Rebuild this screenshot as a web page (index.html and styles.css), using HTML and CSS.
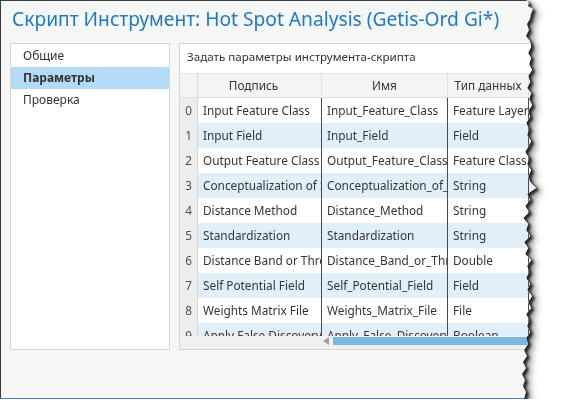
FILE: index.html
```
<!DOCTYPE html>
<html>

<head>
    <title>Скрипт Инструмент</title>
    <link rel="stylesheet" href="styles.css">
</head>

<body>
    <div class="frame">
        <div class="window">
            <h1 class="title">Скрипт Инструмент: Hot Spot Analysis (Getis-Ord Gi*)</h1>
            <div class="content">
                <ul class="nav">
                    <li>Общие</li>
                    <li class="active">Параметры</li>
                    <li>Проверка</li>
                </ul>
                <div class="panel">
                    <div class="panel-head">Задать параметры инструмента-скрипта</div>
                    <div class="grid">
                        <div class="row head">
                            <div class="num"></div>
                            <div class="cell caption">Подпись</div>
                            <div class="cell">Имя</div>
                            <div class="cell">Тип данных</div>
                            <div class="cell"></div>
                        </div>
                        <div class="row">
                            <div class="num">0</div>
                            <div class="cell">Input Feature Class</div>
                            <div class="cell">Input_Feature_Class</div>
                            <div class="cell">Feature Layer</div>
                            <div class="cell"></div>
                        </div>
                        <div class="row alt">
                            <div class="num">1</div>
                            <div class="cell">Input Field</div>
                            <div class="cell">Input_Field</div>
                            <div class="cell">Field</div>
                            <div class="cell"></div>
                        </div>
                        <div class="row">
                            <div class="num">2</div>
                            <div class="cell">Output Feature Class</div>
                            <div class="cell">Output_Feature_Class</div>
                            <div class="cell">Feature Class</div>
                            <div class="cell"></div>
                        </div>
                        <div class="row alt">
                            <div class="num">3</div>
                            <div class="cell">Conceptualization of Spatial Relationships</div>
                            <div class="cell">Conceptualization_of_Spatial_Relationships</div>
                            <div class="cell">String</div>
                            <div class="cell"></div>
                        </div>
                        <div class="row">
                            <div class="num">4</div>
                            <div class="cell">Distance Method</div>
                            <div class="cell">Distance_Method</div>
                            <div class="cell">String</div>
                            <div class="cell"></div>
                        </div>
                        <div class="row alt">
                            <div class="num">5</div>
                            <div class="cell">Standardization</div>
                            <div class="cell">Standardization</div>
                            <div class="cell">String</div>
                            <div class="cell"></div>
                        </div>
                        <div class="row">
                            <div class="num">6</div>
                            <div class="cell">Distance Band or Threshold Distance</div>
                            <div class="cell">Distance_Band_or_Threshold_Distance</div>
                            <div class="cell">Double</div>
                            <div class="cell"></div>
                        </div>
                        <div class="row alt">
                            <div class="num">7</div>
                            <div class="cell">Self Potential Field</div>
                            <div class="cell">Self_Potential_Field</div>
                            <div class="cell">Field</div>
                            <div class="cell"></div>
                        </div>
                        <div class="row">
                            <div class="num">8</div>
                            <div class="cell">Weights Matrix File</div>
                            <div class="cell">Weights_Matrix_File</div>
                            <div class="cell">File</div>
                            <div class="cell"></div>
                        </div>
                        <div class="row alt">
                            <div class="num">9</div>
                            <div class="cell">Apply False Discovery Rate (FDR) Correction</div>
                            <div class="cell">Apply_False_Discovery_Rate__FDR__Correction</div>
                            <div class="cell">Boolean</div>
                            <div class="cell"></div>
                        </div>
                    </div>
                    <div class="hscroll">
                        <div class="arrow"></div>
                        <div class="thumb"></div>
                    </div>
                </div>
            </div>
        </div>
    </div>
</body>

</html>
```

FILE: styles.css
```
body {
    margin: 0;
    background-color: white;
    font-family: "Noto Sans", "Open Sans", sans-serif;
    color: #333;
}

/* рваный край скриншота + тень */
.frame {
    width: 545px;
    filter: drop-shadow(3px 2px 1px rgba(0, 0, 0, 0.7)) drop-shadow(3px 2px 3px rgba(0, 0, 0, 0.5));
}

.window {
    box-sizing: border-box;
    width: 545px;
    height: 399px;
    background-color: #f5f6f6;
    border-top: 1px solid #3a3a3a;
    border-left: 1px solid #3a3a3a;
    border-bottom: 1px solid #3b87c9;
    padding-left: 9px;
    overflow: hidden;
    clip-path: polygon(0 0, 526px 0, 529px 3px, 528px 6px, 533px 9px, 531px 14px, 530px 19px, 527px 24px, 529px 30px,
        526px 36px, 530px 41px, 531px 47px, 528px 53px, 531px 58px, 529px 64px, 532px 70px, 528px 76px, 530px 82px,
        527px 88px, 531px 93px, 529px 99px, 532px 105px, 528px 111px, 530px 117px, 526px 123px, 529px 129px,
        527px 135px, 531px 141px, 528px 147px, 525px 152px, 529px 158px, 527px 164px, 531px 170px, 528px 176px,
        530px 182px, 536px 188px, 527px 194px, 530px 200px, 525px 206px, 529px 212px, 523px 218px, 528px 224px,
        526px 230px, 530px 236px, 524px 242px, 528px 248px, 525px 254px, 531px 260px, 527px 266px, 529px 272px,
        526px 278px, 530px 284px, 527px 290px, 532px 296px, 528px 302px, 531px 308px, 526px 314px, 529px 320px,
        527px 326px, 530px 332px, 526px 338px, 528px 344px, 524px 350px, 527px 356px, 523px 362px, 526px 368px,
        522px 374px, 525px 380px, 523px 386px, 526px 392px, 524px 399px, 0 399px);
}

.title {
    margin: 0;
    height: 42px;
    padding-left: 2px;
    line-height: 35px;
    font-size: 19.2px;
    font-weight: normal;
    color: #1f79c4;
    white-space: nowrap;
}

.content {
    display: flex;
    gap: 9px;
    height: 307px;
}

.nav {
    box-sizing: border-box;
    width: 160px;
    flex: none;
    margin: 0;
    padding: 1px 0 0;
    list-style: none;
    background-color: white;
    border: 1px solid #d6d6d6;
}

.nav li {
    height: 22px;
    line-height: 22px;
    padding-left: 12px;
    font-size: 12px;
}

.nav li.active {
    background-color: #b3dbf6;
    font-weight: bold;
}

.panel {
    box-sizing: border-box;
    width: 420px;
    flex: none;
    display: flex;
    flex-direction: column;
    background-color: #f0f1f1;
    border: 1px solid #d6d6d6;
}

.panel-head {
    height: 29px;
    line-height: 25px;
    padding-left: 7px;
    font-size: 11.6px;
    background-color: white;
    border-bottom: 1px solid #e2e2e2;
}

.grid {
    height: 262px;
    overflow: hidden;
}

.row {
    display: grid;
    grid-template-columns: 18px 124px 126px 81px 80px;
    height: 25px;
    box-sizing: border-box;
    font-size: 11.8px;
    color: #353535;
}

.row .num {
    background-color: #eceeee;
    border-right: 1px solid #d4d8d8;
    border-bottom: 1px solid #dde0e0;
    text-align: center;
    line-height: 25px;
    color: #505050;
}

.row .cell {
    box-sizing: border-box;
    padding-left: 5px;
    line-height: 25px;
    white-space: nowrap;
    overflow: hidden;
    background-color: white;
    border-right: 1px solid #4a4a4a;
    border-bottom: 1px solid #d5dadf;
}

.row .cell:last-child {
    border-right: none;
}

.row.alt .cell {
    background-color: #e1effa;
}

.row.head {
    height: 24px;
}

.row.head .num,
.row.head .cell {
    background-color: #f3f4f4;
    line-height: 23px;
}

.row.head .cell {
    text-align: center;
    padding-left: 0;
    border-right: 1px solid #e0e2e2;
    border-bottom: 1px solid #dcdfdf;
}

.row.head .cell.caption {
    padding-right: 12px;
}

.hscroll {
    display: flex;
    align-items: center;
    height: 10px;
    padding-left: 143px;
}

.arrow {
    width: 0;
    height: 0;
    border-top: 4px solid transparent;
    border-bottom: 4px solid transparent;
    border-right: 6px solid #a0a0a0;
    margin-right: 4px;
}

.thumb {
    flex: 1;
    height: 8px;
    background-color: #7bb8df;
}
```
